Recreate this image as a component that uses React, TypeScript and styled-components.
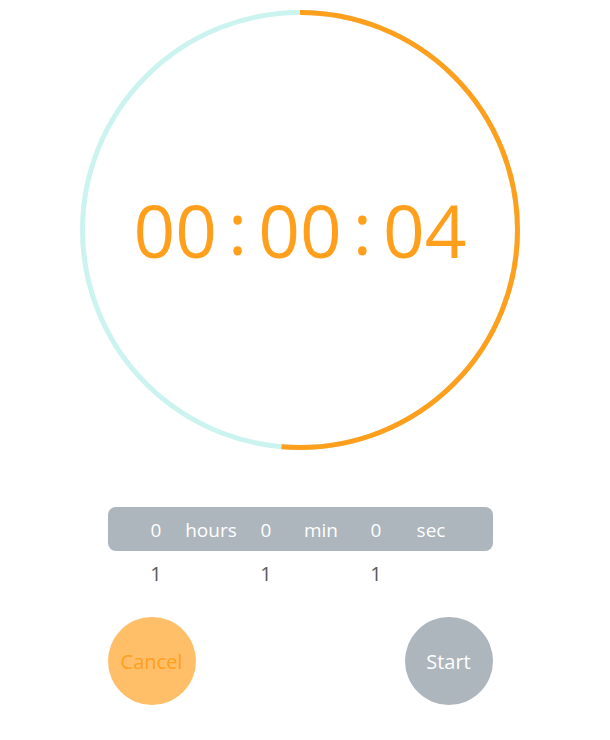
import { createGlobalStyle, styled } from "styled-components";

const GlobalStyle = createGlobalStyle`
  body {
    margin: 0;
    background: #ffffff;
    font-family: "Open Sans", "Noto Sans", sans-serif;
  }
`;

const Page = styled.main`
  display: flex;
  flex-direction: column;
  align-items: center;
  width: 600px;
  padding-top: 10px;
`;

const Dial = styled.div`
  position: relative;
  width: 440px;
  height: 440px;
  display: flex;
  align-items: center;
  justify-content: center;
`;

const Ring = styled.svg`
  position: absolute;
  inset: 0;
`;

const Clock = styled.div`
  display: flex;
  align-items: center;
  color: #ff9f1c;
  font-size: 73px;
  line-height: 1;
  padding-bottom: 2px;
`;

const Colon = styled.span`
  margin: 0 11px;
  position: relative;
  top: -3px;
`;

const Picker = styled.div`
  display: flex;
  flex-direction: column;
  margin-top: 57px;
  width: 385px;
`;

const Row = styled.div<{ $selected?: boolean }>`
  display: flex;
  align-items: center;
  height: 44px;
  padding-left: 21px;
  padding-top: 1px;
  box-sizing: border-box;
  border-radius: 8px;
  background: ${(p) => (p.$selected ? "#adb5bd" : "transparent")};
  color: ${(p) => (p.$selected ? "#ffffff" : "#555b61")};
  font-size: ${(p) => (p.$selected ? "19px" : "20px")};
`;

const Cell = styled.span`
  width: 55px;
  text-align: center;
`;

const Actions = styled.div`
  display: flex;
  justify-content: space-between;
  width: 385px;
  margin-top: 22px;
`;

const RoundButton = styled.button<{ $variant: "cancel" | "start" }>`
  width: 88px;
  height: 88px;
  border: none;
  border-radius: 50%;
  padding: 0;
  font-family: inherit;
  font-size: 20px;
  background: ${(p) => (p.$variant === "cancel" ? "#ffbf69" : "#adb5bd")};
  color: ${(p) => (p.$variant === "cancel" ? "#ff9f1c" : "#ffffff")};
  cursor: pointer;
`;

const R = 217.5;
const CIRC = 2 * Math.PI * R;
const progress = 0.5133;

const units = ["hours", "min", "sec"];

export default function App() {
  return (
    <>
      <GlobalStyle />
      <Page>
        <Dial>
          <Ring width="440" height="440" viewBox="0 0 440 440">
            <circle cx="220" cy="220" r={R} fill="none" stroke="#cbf3f0" strokeWidth="5" />
            <circle
              cx="220"
              cy="220"
              r={R}
              fill="none"
              stroke="#ff9f1c"
              strokeWidth="5"
              strokeDasharray={`${CIRC * progress} ${CIRC}`}
              transform="rotate(-90 220 220)"
            />
          </Ring>
          <Clock>
            <span>00</span>
            <Colon>:</Colon>
            <span>00</span>
            <Colon>:</Colon>
            <span>04</span>
          </Clock>
        </Dial>
        <Picker>
          <Row $selected>
            {units.map((u) => (
              <>
                <Cell key={u + "v"}>0</Cell>
                <Cell key={u}>{u}</Cell>
              </>
            ))}
          </Row>
          <Row>
            {units.map((u) => (
              <>
                <Cell key={u + "n"}>1</Cell>
                <Cell key={u + "e"} />
              </>
            ))}
          </Row>
        </Picker>
        <Actions>
          <RoundButton $variant="cancel">Cancel</RoundButton>
          <RoundButton $variant="start">Start</RoundButton>
        </Actions>
      </Page>
    </>
  );
}
